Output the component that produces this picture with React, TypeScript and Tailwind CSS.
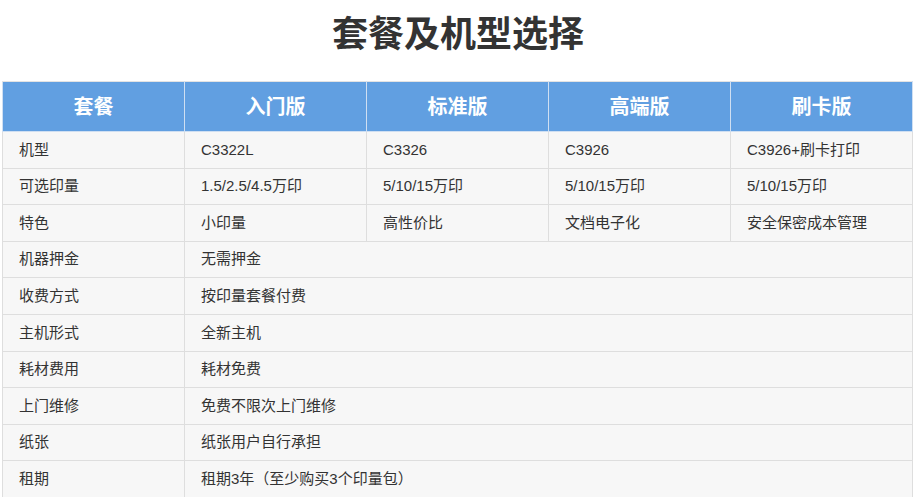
const heads = ["套餐", "入门版", "标准版", "高端版", "刷卡版"];

const splitRows: string[][] = [
  ["机型", "C3322L", "C3326", "C3926", "C3926+刷卡打印"],
  ["可选印量", "1.5/2.5/4.5万印", "5/10/15万印", "5/10/15万印", "5/10/15万印"],
  ["特色", "小印量", "高性价比", "文档电子化", "安全保密成本管理"],
];

const mergedRows: [string, string][] = [
  ["机器押金", "无需押金"],
  ["收费方式", "按印量套餐付费"],
  ["主机形式", "全新主机"],
  ["耗材费用", "耗材免费"],
  ["上门维修", "免费不限次上门维修"],
  ["纸张", "纸张用户自行承担"],
  ["租期", "租期3年（至少购买3个印量包）"],
];

const cell = "border border-[#dedede] px-4 h-[36.6px] text-left font-normal";

export default function App() {
  return (
    <div
      className="bg-white text-[#333] w-[916px] h-[497px] overflow-hidden"
      style={{ fontFamily: '"Liberation Sans", "Noto Sans CJK SC", sans-serif' }}
    >
      <h1 className="text-center text-[36px] leading-[44px] font-bold pt-[13px] mb-[24px] text-[#333]">
        套餐及机型选择
      </h1>
      <table className="ml-[2px] w-[911px] border-collapse table-fixed text-[15px]">
        <thead>
          <tr className="bg-[#619fe1] h-[50px]">
            {heads.map((h) => (
              <th
                key={h}
                className="border border-[#cfdff2] border-t-[#e3e3e3] text-white text-[20px] font-bold text-center"
              >
                {h}
              </th>
            ))}
          </tr>
        </thead>
        <tbody className="bg-[#f7f7f7]">
          {splitRows.map((r) => (
            <tr key={r[0]}>
              {r.map((c, i) => (
                <td key={i} className={cell}>
                  {c}
                </td>
              ))}
            </tr>
          ))}
          {mergedRows.map(([a, b]) => (
            <tr key={a}>
              <td className={cell}>{a}</td>
              <td className={cell} colSpan={4}>
                {b}
              </td>
            </tr>
          ))}
        </tbody>
      </table>
    </div>
  );
}
